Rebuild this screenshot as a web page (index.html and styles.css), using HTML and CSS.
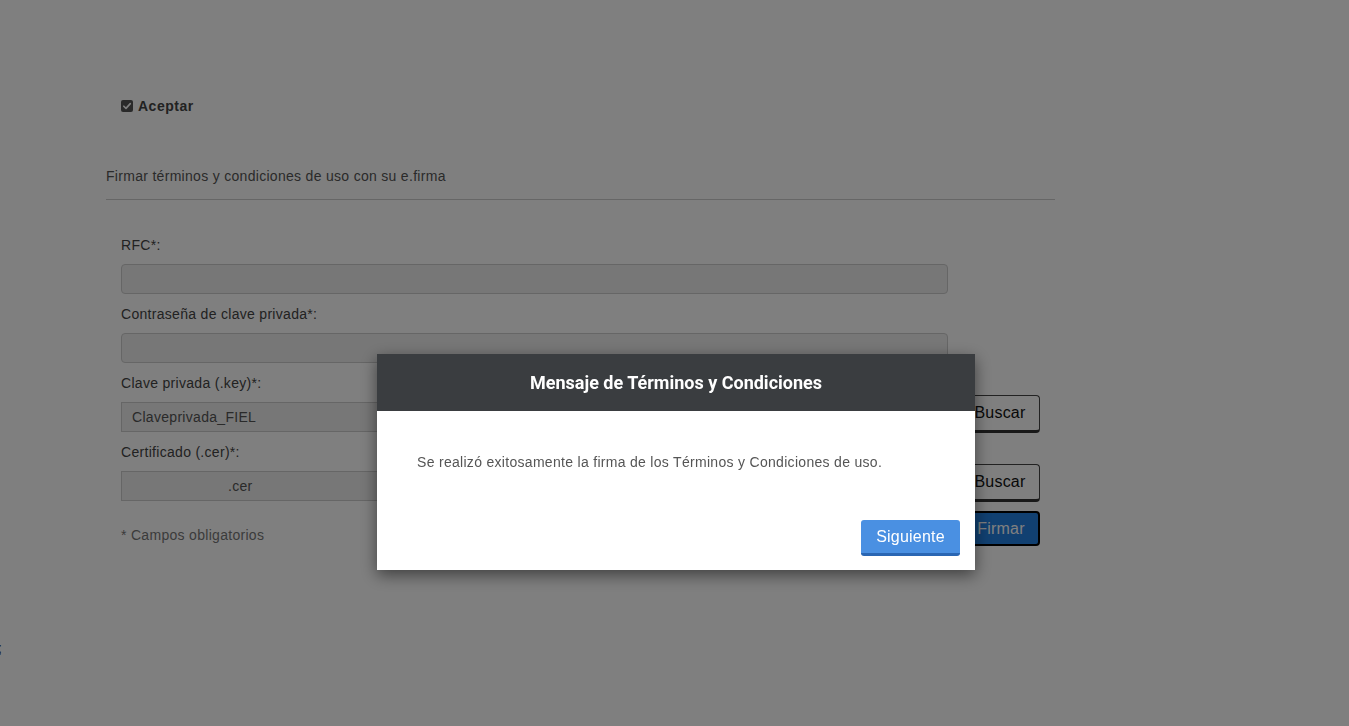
FILE: index.html
```html
<!DOCTYPE html>
<html lang="es">
<head>
<meta charset="utf-8">
<title>Términos y Condiciones</title>
<link rel="stylesheet" href="styles.css">
</head>
<body>
<div class="page">
  <div class="accept">
    <span class="check"><svg width="12" height="12" viewBox="0 0 12 12"><rect x="0" y="0" width="12" height="12" rx="2" fill="#555"/><path d="M2.8 6.2 L5 8.4 L9.3 3.6" fill="none" stroke="#fff" stroke-width="1.6" stroke-linecap="round" stroke-linejoin="round"/></svg></span>
    <span class="accept-label">Aceptar</span>
  </div>
  <div class="section-title">Firmar términos y condiciones de uso con su e.firma</div>
  <hr class="divider">
  <form class="form">
    <div class="group">
      <label class="label">RFC*:</label>
      <div class="input"></div>
    </div>
    <div class="group">
      <label class="label">Contraseña de clave privada*:</label>
      <div class="input"></div>
    </div>
    <div class="row">
      <div class="group grow">
        <label class="label">Clave privada (.key)*:</label>
        <div class="input file"><span>Claveprivada_FIEL</span></div>
      </div>
      <button type="button" class="btn-default">Buscar</button>
    </div>
    <div class="row">
      <div class="group grow">
        <label class="label">Certificado (.cer)*:</label>
        <div class="input file"><span class="cer">.cer</span></div>
      </div>
      <button type="button" class="btn-default">Buscar</button>
    </div>
    <div class="row bottom">
      <div class="required">* Campos obligatorios</div>
      <button type="button" class="btn-primary">Firmar</button>
    </div>
  </form>
  <div class="stray">;</div>
</div>
<div class="overlay"></div>
<div class="modal">
  <div class="modal-header">Mensaje de Términos y Condiciones</div>
  <div class="modal-body">
    <p class="message">Se realizó exitosamente la firma de los Términos y Condiciones de uso.</p>
    <div class="modal-footer">
      <button type="button" class="btn-next">Siguiente</button>
    </div>
  </div>
</div>
</body>
</html>
```
FILE: styles.css
```css
html, body {
  margin: 0;
  padding: 0;
  background: #fff;
  font-family: "Liberation Sans", Arial, sans-serif;
  font-size: 14px;
  letter-spacing: 0.3px;
  color: #333;
  overflow: hidden;
}

.page {
  padding: 93px 0 0 106px;
  width: 949px;
}

.accept {
  display: flex;
  align-items: center;
  gap: 5px;
  margin-left: 15px;
  height: 26px;
}

.check {
  display: flex;
  width: 12px;
  height: 12px;
}

.accept-label {
  font-weight: bold;
  font-size: 14px;
  letter-spacing: 0.5px;
  color: #444;
}

.section-title {
  margin-top: 47px;
  line-height: 20px;
  color: #555;
}

.divider {
  margin: 13px 0 0 0;
  border: 0;
  border-top: 1px solid #ccc;
  height: 0;
}

.form {
  margin: 35px 0 0 15px;
  width: 919px;
}

.group {
  display: flex;
  flex-direction: column;
  gap: 9px;
  margin-bottom: 10px;
}

.label {
  line-height: 20px;
  color: #444;
}

.input {
  width: 827px;
  height: 30px;
  box-sizing: border-box;
  background: #eee;
  border: 1px solid #ccc;
  border-radius: 4px;
  display: flex;
  align-items: center;
  padding: 0 10px;
  color: #555;
  font-size: 14px;
}

.input.file {
  width: 100%;
  border-radius: 0;
}

.cer {
  margin-left: 96px;
}

.row {
  display: flex;
  align-items: flex-end;
  gap: 14px;
}

.row .group {
  margin-bottom: 10px;
}

.grow {
  flex: 1;
}

.btn-default {
  width: 80px;
  height: 38px;
  margin-bottom: 9px;
  box-sizing: border-box;
  background: #fff;
  border: 1px solid #444;
  border-bottom: 3px solid #333;
  border-radius: 4px;
  font-family: "Liberation Sans", Arial, sans-serif;
  font-size: 16px;
  letter-spacing: 0.2px;
  color: #111;
  padding: 0;
}

.row.bottom {
  justify-content: space-between;
  align-items: flex-end;
  margin-top: 0;
}

.required {
  color: #777;
  line-height: 20px;
  padding-bottom: 1px;
}

.btn-primary {
  width: 78px;
  height: 35px;
  box-sizing: border-box;
  background: #2280e2;
  border: 2px solid #000;
  border-radius: 4px;
  font-family: "Liberation Sans", Arial, sans-serif;
  font-size: 16px;
  letter-spacing: 0.2px;
  color: #fff;
  padding: 0;
}

.stray {
  margin: 92px 0 0 -108px;
  color: #333;
  line-height: 20px;
}

.overlay {
  position: fixed;
  inset: 0;
  background: rgba(0, 0, 0, 0.5);
}

.modal {
  position: fixed;
  top: 354px;
  left: 377px;
  width: 598px;
  background: #fff;
  box-shadow: 0 5px 15px rgba(0, 0, 0, 0.5);
}

.modal-header {
  height: 57px;
  background: #3a3d40;
  color: #fff;
  font-family: Roboto, "Liberation Sans", sans-serif;
  font-weight: bold;
  font-size: 18px;
  letter-spacing: 0;
  display: flex;
  align-items: center;
  justify-content: center;
}

.modal-body {
  padding: 41px 15px 14px 40px;
}

.message {
  margin: 0;
  line-height: 20px;
  color: #555;
  font-size: 14px;
}

.modal-footer {
  display: flex;
  justify-content: flex-end;
  margin-top: 48px;
}

.btn-next {
  width: 99px;
  height: 36px;
  box-sizing: border-box;
  background: #4a90e2;
  border: 0;
  border-bottom: 3px solid #2a66b3;
  border-radius: 3px;
  color: #fff;
  font-family: "Liberation Sans", Arial, sans-serif;
  font-size: 16px;
  letter-spacing: 0.2px;
  padding: 0;
}
```
